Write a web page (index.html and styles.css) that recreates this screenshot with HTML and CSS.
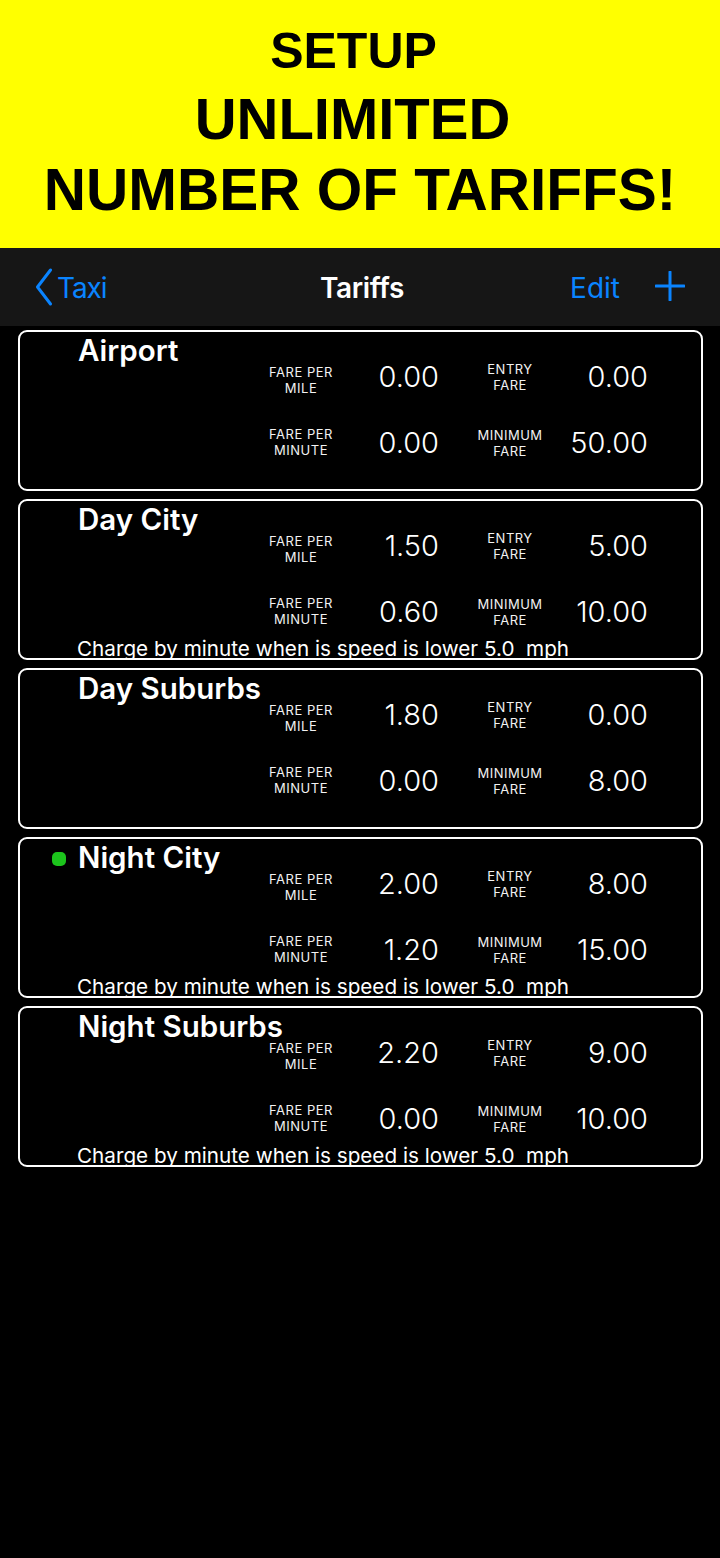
FILE: index.html
```html
<!DOCTYPE html>
<html lang="en">
<head>
<meta charset="utf-8">
<title>Tariffs</title>
<link rel="stylesheet" href="styles.css">
</head>
<body>
<header class="promo">
  <div class="promo-l1">SETUP</div>
  <div class="promo-l2">UNLIMITED</div>
  <div class="promo-l3">NUMBER OF TARIFFS!</div>
</header>

<nav class="navbar">
  <div class="nav-left">
    <svg class="chevron" width="18" height="38" viewBox="0 0 18 38" aria-hidden="true">
      <polyline points="15.5,2 2.5,19 15.5,36" fill="none" stroke="#0A84FF" stroke-width="3" stroke-linecap="round" stroke-linejoin="round"/>
    </svg>
    <span class="nav-link nav-back">Taxi</span>
  </div>
  <div class="nav-title">Tariffs</div>
  <div class="nav-right">
    <span class="nav-link">Edit</span>
    <svg class="plus" width="30" height="30" viewBox="0 0 30 30" aria-hidden="true">
      <line x1="15" y1="1" x2="15" y2="29" stroke="#0A84FF" stroke-width="3" stroke-linecap="round"/>
      <line x1="1" y1="15" x2="29" y2="15" stroke="#0A84FF" stroke-width="3" stroke-linecap="round"/>
    </svg>
  </div>
</nav>

<main class="list">
  <section class="card">
    <div class="card-head"><span class="marker"></span><span class="card-title">Airport</span></div>
    <div class="row row-top">
      <div class="lbl">FARE PER<br>MILE</div><div class="val">0.00</div>
      <div class="lbl lbl2">ENTRY<br>FARE</div><div class="val">0.00</div>
    </div>
    <div class="row row-bottom">
      <div class="lbl">FARE PER<br>MINUTE</div><div class="val">0.00</div>
      <div class="lbl lbl2">MINIMUM<br>FARE</div><div class="val">50.00</div>
    </div>
  </section>

  <section class="card">
    <div class="card-head"><span class="marker"></span><span class="card-title">Day City</span></div>
    <div class="row row-top">
      <div class="lbl">FARE PER<br>MILE</div><div class="val">1.50</div>
      <div class="lbl lbl2">ENTRY<br>FARE</div><div class="val">5.00</div>
    </div>
    <div class="row row-bottom">
      <div class="lbl">FARE PER<br>MINUTE</div><div class="val">0.60</div>
      <div class="lbl lbl2">MINIMUM<br>FARE</div><div class="val">10.00</div>
    </div>
    <div class="note">Charge by minute when is speed is lower 5.0  mph</div>
  </section>

  <section class="card">
    <div class="card-head"><span class="marker"></span><span class="card-title">Day Suburbs</span></div>
    <div class="row row-top">
      <div class="lbl">FARE PER<br>MILE</div><div class="val">1.80</div>
      <div class="lbl lbl2">ENTRY<br>FARE</div><div class="val">0.00</div>
    </div>
    <div class="row row-bottom">
      <div class="lbl">FARE PER<br>MINUTE</div><div class="val">0.00</div>
      <div class="lbl lbl2">MINIMUM<br>FARE</div><div class="val">8.00</div>
    </div>
  </section>

  <section class="card">
    <div class="card-head"><span class="marker active"></span><span class="card-title">Night City</span></div>
    <div class="row row-top">
      <div class="lbl">FARE PER<br>MILE</div><div class="val">2.00</div>
      <div class="lbl lbl2">ENTRY<br>FARE</div><div class="val">8.00</div>
    </div>
    <div class="row row-bottom">
      <div class="lbl">FARE PER<br>MINUTE</div><div class="val">1.20</div>
      <div class="lbl lbl2">MINIMUM<br>FARE</div><div class="val">15.00</div>
    </div>
    <div class="note">Charge by minute when is speed is lower 5.0  mph</div>
  </section>

  <section class="card">
    <div class="card-head"><span class="marker"></span><span class="card-title">Night Suburbs</span></div>
    <div class="row row-top">
      <div class="lbl">FARE PER<br>MILE</div><div class="val">2.20</div>
      <div class="lbl lbl2">ENTRY<br>FARE</div><div class="val">9.00</div>
    </div>
    <div class="row row-bottom">
      <div class="lbl">FARE PER<br>MINUTE</div><div class="val">0.00</div>
      <div class="lbl lbl2">MINIMUM<br>FARE</div><div class="val">10.00</div>
    </div>
    <div class="note">Charge by minute when is speed is lower 5.0  mph</div>
  </section>
</main>
</body>
</html>
```

FILE: styles.css
```css
* { box-sizing: border-box; }

html, body {
  margin: 0;
  padding: 0;
  background: #000;
}

body {
  width: 720px;
  min-height: 1558px;
  font-family: Inter, "Noto Sans", "Liberation Sans", sans-serif;
  color: #fff;
}

/* Promo banner */
.promo {
  height: 248px;
  background: #ffff00;
  color: #000;
  font-family: "Liberation Sans", Arial, sans-serif;
  font-weight: 700;
  text-align: center;
  padding-top: 19px;
}
.promo-l1 { font-size: 50px; line-height: 64px; padding-right: 13px; }
.promo-l2 { font-size: 58px; line-height: 72px; padding-right: 15px; }
.promo-l3 { font-size: 58.5px; line-height: 70px; }

/* Navigation bar */
.navbar {
  height: 78px;
  background: #161616;
  display: grid;
  grid-template-columns: 1fr auto 1fr;
  align-items: center;
  padding: 1px 35px 0 35px;
}
.nav-left {
  display: flex;
  align-items: center;
  gap: 4px;
}
.chevron { display: block; margin-top: -2px; }
.nav-right {
  display: flex;
  align-items: center;
  justify-content: flex-end;
  gap: 35px;
}
.plus { display: block; margin-top: -3px; }
.nav-link {
  color: #0A84FF;
  font-size: 28px;
  line-height: 34px;
  font-weight: 400;
}
.nav-back { letter-spacing: -1.1px; }
.nav-title {
  font-size: 28px;
  line-height: 34px;
  font-weight: 600;
  color: #fff;
  letter-spacing: -0.4px;
  margin-left: 4px;
}

/* List of tariffs */
.list {
  padding: 4px 17px 0 18px;
  display: flex;
  flex-direction: column;
  gap: 8px;
}
.card {
  height: 161px;
  border: 2px solid #fff;
  border-radius: 9px;
  overflow: hidden;
  flex: none;
}
.card-head {
  display: flex;
  align-items: center;
  gap: 12px;
  margin: 5px 0 0 32px;
  height: 26px;
}
.marker {
  width: 14px;
  height: 14px;
  border-radius: 5px;
  margin-top: 3px;
  flex: none;
}
.marker.active { background: #1cc41c; }
.card-title {
  font-size: 29.5px;
  line-height: 26px;
  font-weight: 600;
  white-space: nowrap;
}

.row {
  display: grid;
  grid-template-columns: 90px 93px 116px 93px;
  align-items: start;
  margin-left: 236px;
}
.row-top { margin-top: 1px; height: 62px; }
.row-bottom { height: 32px; }

.lbl {
  font-size: 13px;
  line-height: 16px;
  text-align: center;
  letter-spacing: 0.5px;
  color: #f2f2f2;
}
.lbl2 { padding-left: 26px; }
.val {
  font-size: 29px;
  line-height: 24px;
  font-weight: 300;
  text-align: right;
  margin-top: 1px;
}
.row-top .lbl2 { margin-top: -3px; }
.row-bottom .val { margin-top: 5px; }
.row-bottom .lbl2 { margin-top: 1px; }

.note {
  margin: 10px 0 0 57px;
  font-size: 20.7px;
  line-height: 24px;
  white-space: pre;
  color: #fff;
}
```
